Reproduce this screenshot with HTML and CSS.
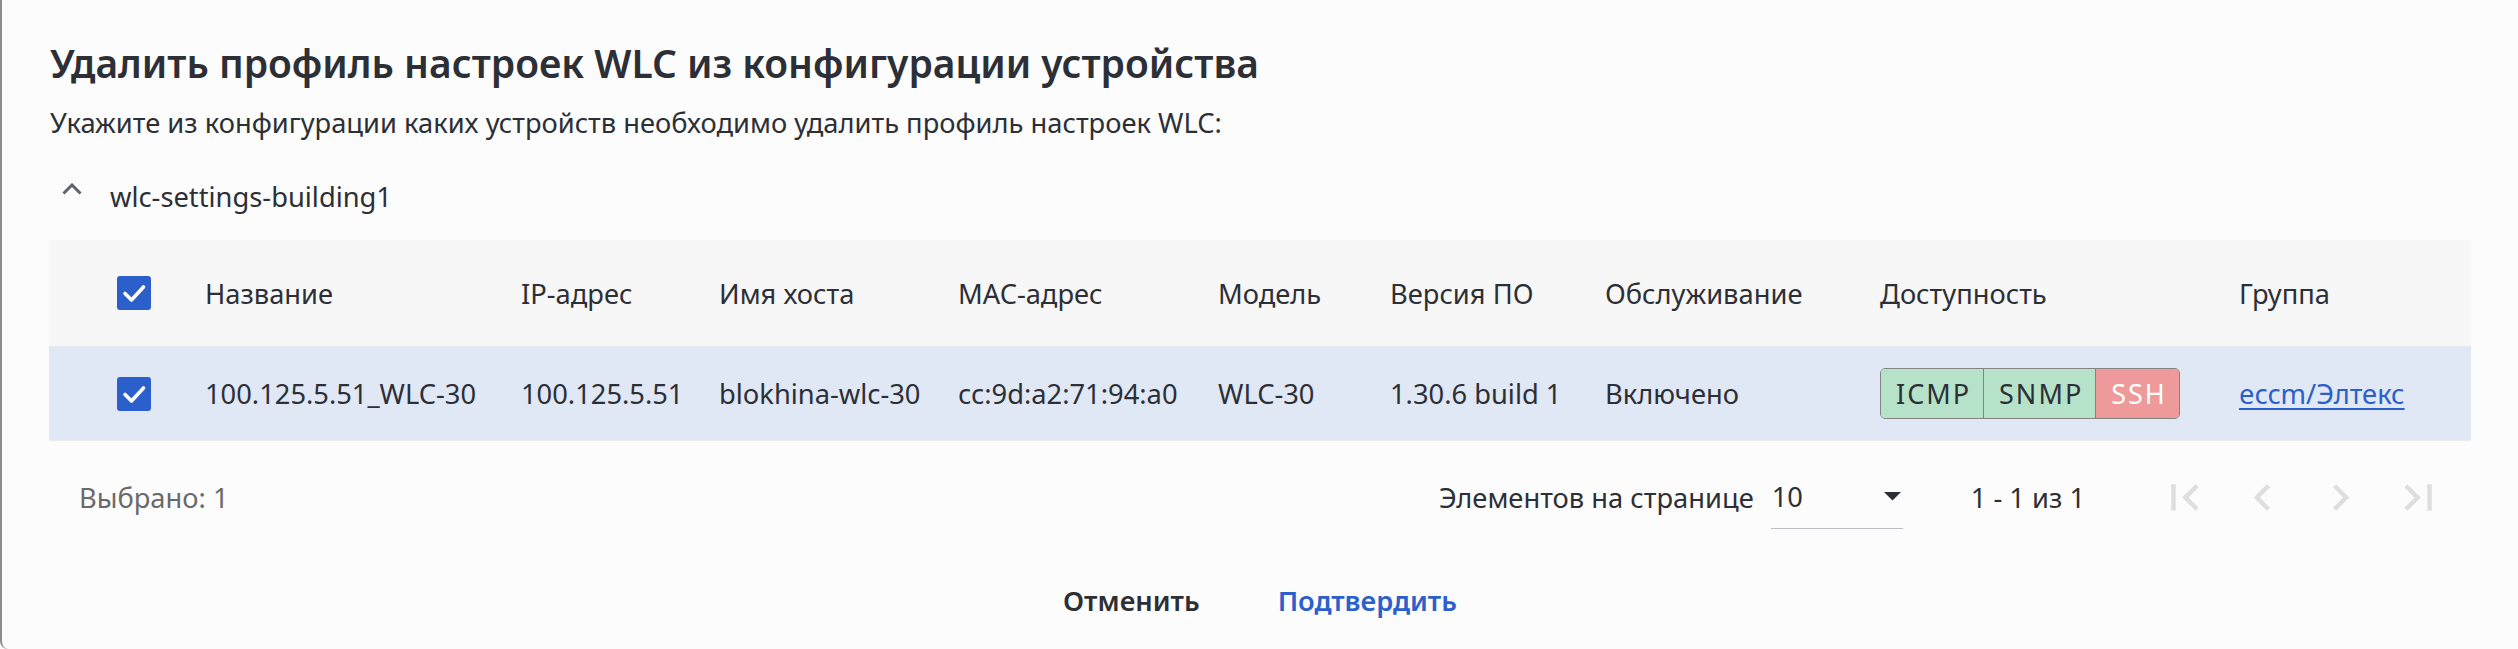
FILE: index.html
```html
<!DOCTYPE html>
<html lang="ru">
<head>
<meta charset="utf-8">
<title>Удалить профиль настроек WLC</title>
<link rel="stylesheet" href="styles.css">
</head>
<body>
<div class="dialog">
  <h1 class="title">Удалить профиль настроек WLC из конфигурации устройства</h1>
  <p class="subtitle">Укажите из конфигурации каких устройств необходимо удалить профиль настроек WLC:</p>
  <div class="group-head">
    <svg class="chev" viewBox="0 0 20 12" width="20" height="12"><path d="M1.5 10.5 L10 2 L18.5 10.5" fill="none" stroke="#5b6371" stroke-width="3"/></svg>
    <span>wlc-settings-building1</span>
  </div>
  <div class="table">
    <div class="grid head">
      <div class="cell cb-cell"><span class="cb"><svg viewBox="0 0 34 34" width="34" height="34"><path d="M8 17.5 L14.5 24 L26.5 11" fill="none" stroke="#fff" stroke-width="3.6" stroke-linecap="round" stroke-linejoin="round"/></svg></span></div>
      <div class="cell">Название</div>
      <div class="cell">IP-адрес</div>
      <div class="cell">Имя хоста</div>
      <div class="cell">MAC-адрес</div>
      <div class="cell">Модель</div>
      <div class="cell">Версия ПО</div>
      <div class="cell">Обслуживание</div>
      <div class="cell">Доступность</div>
      <div class="cell">Группа</div>
    </div>
    <div class="grid row">
      <div class="cell cb-cell"><span class="cb"><svg viewBox="0 0 34 34" width="34" height="34"><path d="M8 17.5 L14.5 24 L26.5 11" fill="none" stroke="#fff" stroke-width="3.6" stroke-linecap="round" stroke-linejoin="round"/></svg></span></div>
      <div class="cell">100.125.5.51_WLC-30</div>
      <div class="cell">100.125.5.51</div>
      <div class="cell">blokhina-wlc-30</div>
      <div class="cell">cc:9d:a2:71:94:a0</div>
      <div class="cell">WLC-30</div>
      <div class="cell">1.30.6 build 1</div>
      <div class="cell">Включено</div>
      <div class="cell">
        <div class="badges">
          <span class="badge ok">ICMP</span>
          <span class="badge ok">SNMP</span>
          <span class="badge bad">SSH</span>
        </div>
      </div>
      <div class="cell"><a class="link" href="#">eccm/Элтекс</a></div>
    </div>
  </div>
  <div class="footer">
    <span class="selected">Выбрано: 1</span>
    <div class="pager">
      <span class="pager-label">Элементов на странице</span>
      <div class="select">
        <span>10</span>
        <svg class="drop" viewBox="0 0 10 5" width="17" height="8.5"><path d="M0 0 L5 5 L10 0 Z" fill="#2d2f36"/></svg>
      </div>
      <span class="range">1 - 1 из 1</span>
      <div class="nav">
        <span class="nav-btn"><svg viewBox="0 0 24 24" width="53" height="53"><path d="M18.41 16.59L13.82 12l4.59-4.59L17 6l-6 6 6 6zM6 6h2v12H6z" fill="#dedede"/></svg></span>
        <span class="nav-btn"><svg viewBox="0 0 24 24" width="53" height="53"><path d="M15.41 7.41L14 6l-6 6 6 6 1.41-1.41L10.83 12z" fill="#dedede"/></svg></span>
        <span class="nav-btn"><svg viewBox="0 0 24 24" width="53" height="53"><path d="M10 6L8.59 7.41 13.17 12l-4.58 4.59L10 18l6-6z" fill="#dedede"/></svg></span>
        <span class="nav-btn"><svg viewBox="0 0 24 24" width="53" height="53"><path d="M5.59 7.41L10.18 12l-4.59 4.59L7 18l6-6-6-6zM16 6h2v12h-2z" fill="#dedede"/></svg></span>
      </div>
    </div>
  </div>
  <div class="actions">
    <button class="btn cancel">Отменить</button>
    <button class="btn confirm">Подтвердить</button>
  </div>
</div>
</body>
</html>
```

FILE: styles.css
```css
* { box-sizing: border-box; }
html, body {
  margin: 0;
  padding: 0;
  background: #fcfcfc;
}
body {
  font-family: "Noto Sans", "Open Sans", sans-serif;
  color: #2d2f36;
  font-size: 27.3px;
  width: 2518px;
  height: 649px;
  overflow: hidden;
}
.dialog {
  height: 649px;
  border-left: 2px solid #8c8c8c;
  border-bottom-left-radius: 8px;
  padding: 39px 47px 0 47px;
  display: flex;
  flex-direction: column;
}
.title {
  margin: 0;
  font-size: 39px;
  font-weight: 600;
  line-height: 48px;
  padding-left: 1px;
}
.subtitle {
  margin: 18px 0 0 0;
  line-height: 36px;
  padding-left: 1px;
}
.group-head {
  margin-top: 38px;
  height: 36px;
  display: flex;
  align-items: center;
  line-height: 36px;
}
.chev {
  margin-left: 13px;
  margin-right: 28px;
  position: relative;
  top: -8px;
}
.table {
  margin-top: 25px;
}
.grid {
  display: grid;
  grid-template-columns: 156px 316px 198px 239px 260px 172px 215px 275px 359px 1fr;
  align-items: center;
}
.head {
  height: 107px;
  background: #f7f7f7;
  border-bottom: 1px solid #e8ebf1;
}
.row {
  height: 94px;
  background: #e0e7f5;
  border-bottom: 1px solid #ebebeb;
}
.cell {
  white-space: nowrap;
}
.cb-cell {
  padding-left: 68px;
  display: flex;
  align-items: center;
}
.cb {
  width: 34px;
  height: 34px;
  border-radius: 3px;
  background: #2a5fcc;
  display: block;
}
.cb svg { display: block; }
.badges {
  display: inline-flex;
  border: 1px solid #848484;
  border-radius: 5px;
  overflow: hidden;
  height: 51px;
}
.badge {
  display: flex;
  align-items: center;
  padding: 0 12px 0 15px;
  font-size: 27px;
  letter-spacing: 2px;
}
.badge + .badge { border-left: 1px solid #848484; }
.badge.ok { background: #b5e2c9; color: #2d2f36; }
.badge.bad { background: #ee9a9a; color: #ffffff; }
.link {
  color: #2b5fcc;
  text-decoration: underline;
  text-underline-offset: 4px;
}
.footer {
  height: 112px;
  display: flex;
  align-items: center;
  justify-content: space-between;
}
.selected {
  padding-left: 30px;
  color: #6a6a6a;
}
.pager {
  display: flex;
  align-items: center;
  padding-right: 14px;
}
.pager-label {
  margin-right: 17px;
}
.select {
  width: 132px;
  height: 64px;
  display: flex;
  align-items: center;
  justify-content: space-between;
  border-bottom: 1px solid #bdbec7;
  padding: 0 2px 0 1px;
}
.drop { display: block; }
.range {
  margin-left: 68px;
  margin-right: 60px;
}
.nav {
  display: flex;
}
.nav-btn {
  width: 78px;
  display: flex;
  justify-content: center;
}
.nav-btn svg { display: block; }
.actions {
  flex: 1;
  display: flex;
  align-items: center;
  justify-content: center;
}
.btn {
  font-family: "Noto Sans", "Open Sans", sans-serif;
  font-size: 27.3px;
  font-weight: 600;
  background: none;
  border: none;
  padding: 0 39px;
  line-height: 40px;
  cursor: pointer;
}
.cancel { color: #2d2f36; }
.confirm { color: #2b5fcc; }
```
